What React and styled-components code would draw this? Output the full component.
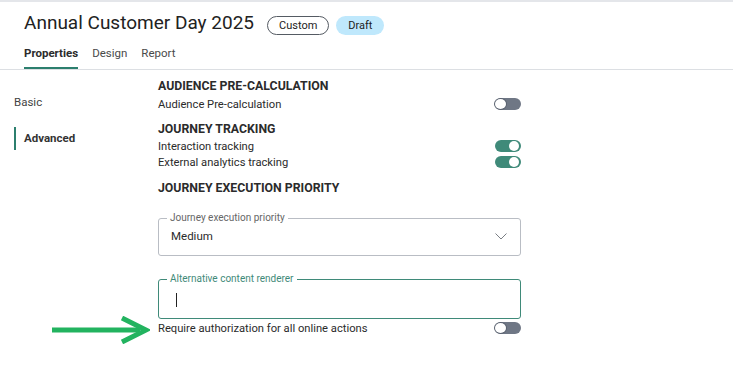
import React from 'react';
import styled, { createGlobalStyle } from 'styled-components';

const GlobalStyle = createGlobalStyle`
  body {
    margin: 0;
    background: #ffffff;
    font-family: Roboto, "Liberation Sans", sans-serif;
    color: #2b2b2b;
  }
`;

const Page = styled.div`
  width: 733px;
  height: 391px;
  border-top: 2px solid #e4e6ea;
  box-sizing: border-box;
  overflow: hidden;
`;

const Header = styled.header`
  padding: 9px 0 0 24px;
  border-bottom: 1px solid #dcdfe3;
`;

const TitleRow = styled.div`
  display: flex;
  align-items: baseline;
  gap: 13px;
`;

const Title = styled.h1`
  margin: 0;
  font-size: 19px;
  line-height: 24px;
  font-weight: 400;
  color: #222;
`;

const Badges = styled.div`
  display: flex;
  gap: 7px;
`;

const Badge = styled.span`
  display: inline-flex;
  align-items: center;
  justify-content: center;
  height: 19px;
  padding: 0 11px;
  border-radius: 10px;
  font-size: 11px;
  color: #222;
  box-sizing: border-box;
  border: 1px solid ${p => (p.$outlined ? '#555b63' : 'transparent')};
  background: ${p => (p.$outlined ? '#fff' : '#bfe8fc')};
`;

const Tabs = styled.nav`
  display: flex;
  gap: 14px;
  margin-top: 8px;
`;

const Tab = styled.div`
  font-size: 11.5px;
  line-height: 14px;
  padding: 3px 0 7px;
  font-weight: ${p => (p.$active ? 700 : 400)};
  color: ${p => (p.$active ? '#2b2b2b' : '#4a4a4a')};
  border-bottom: 2px solid ${p => (p.$active ? '#2c7f6e' : 'transparent')};
`;

const Body = styled.div`
  display: flex;
`;

const Sidebar = styled.aside`
  width: 158px;
  padding-top: 21px;
  display: flex;
  flex-direction: column;
  gap: 13px;
`;

const SideItem = styled.div`
  font-size: 11.5px;
  line-height: 23px;
  margin-left: 14px;
  padding-left: ${p => (p.$active ? '8px' : '0')};
  border-left: ${p => (p.$active ? '2px solid #2c7f6e' : 'none')};
  font-weight: ${p => (p.$active ? 700 : 400)};
  color: ${p => (p.$active ? '#333' : '#444')};
`;

const Content = styled.main`
  width: 363px;
  padding-top: 8px;
  display: flex;
  flex-direction: column;
`;

const Heading = styled.h2`
  margin: ${p => p.$top || 0}px 0 0;
  font-size: 12.3px;
  line-height: 16px;
  font-weight: 700;
  color: #2b2b2b;
`;

const Row = styled.div`
  display: flex;
  align-items: center;
  justify-content: space-between;
  height: 16px;
  margin-top: ${p => p.$top || 0}px;
  font-size: 11.2px;
  color: #2b2b2b;
`;

const Track = styled.span`
  position: relative;
  width: 26px;
  height: 12px;
  border-radius: 6px;
  background: ${p => (p.$on ? '#3f8a79' : '#6f7785')};
`;

const Knob = styled.span`
  position: absolute;
  top: 1px;
  left: ${p => (p.$on ? '14px' : '0px')};
  width: ${p => (p.$on ? '10px' : '11px')};
  height: 10px;
  border-radius: 50%;
  background: #fff;
  box-shadow: ${p => (p.$on ? 'none' : '0 0 0 1px #5a6270')};
`;

const Field = styled.div`
  position: relative;
  height: ${p => p.$h}px;
  margin-top: ${p => p.$top}px;
  border: 1px solid ${p => (p.$focus ? '#3f8a79' : '#b9bdc4')};
  border-radius: 3px;
  box-sizing: border-box;
  display: flex;
  align-items: center;
  padding: 0 13px 2px 12px;
`;

const Legend = styled.span`
  position: absolute;
  top: -7px;
  left: 8px;
  padding: 0 3px;
  background: #fff;
  font-size: 10px;
  line-height: 12px;
  color: ${p => (p.$focus ? '#3f8a79' : '#666')};
`;

const Value = styled.span`
  flex: 1;
  font-size: 11.5px;
  color: #2b2b2b;
`;

const Caret = styled.span`
  width: 1px;
  height: 14px;
  margin-left: 5px;
  margin-top: 3px;
  background: #222;
`;

const Arrow = styled.svg`
  position: absolute;
  left: 52px;
  top: 316px;
`;

function Toggle({ on }) {
  return (
    <Track $on={on}>
      <Knob $on={on} />
    </Track>
  );
}

export default function App() {
  return (
    <>
      <GlobalStyle />
      <Page>
        <Header>
          <TitleRow>
            <Title>Annual Customer Day 2025</Title>
            <Badges>
              <Badge $outlined>Custom</Badge>
              <Badge>Draft</Badge>
            </Badges>
          </TitleRow>
          <Tabs>
            <Tab $active>Properties</Tab>
            <Tab>Design</Tab>
            <Tab>Report</Tab>
          </Tabs>
        </Header>
        <Body>
          <Sidebar>
            <SideItem>Basic</SideItem>
            <SideItem $active>Advanced</SideItem>
          </Sidebar>
          <Content>
            <Heading>AUDIENCE PRE-CALCULATION</Heading>
            <Row $top={2}>
              Audience Pre-calculation
              <Toggle />
            </Row>
            <Heading $top={9}>JOURNEY TRACKING</Heading>
            <Row $top={1}>
              Interaction tracking
              <Toggle on />
            </Row>
            <Row>
              External analytics tracking
              <Toggle on />
            </Row>
            <Heading $top={10}>JOURNEY EXECUTION PRIORITY</Heading>
            <Field $h={38} $top={22}>
              <Legend>Journey execution priority</Legend>
              <Value>Medium</Value>
              <svg width="12" height="7" viewBox="0 0 12 7">
                <path d="M0.5 0.5 L6 6 L11.5 0.5" fill="none" stroke="#7a7e84" strokeWidth="1" />
              </svg>
            </Field>
            <Field $h={40} $top={23} $focus>
              <Legend $focus>Alternative content renderer</Legend>
              <Caret />
            </Field>
            <Row $top={1}>
              Require authorization for all online actions
              <Toggle />
            </Row>
          </Content>
        </Body>
        <Arrow width="98" height="28" viewBox="0 0 98 28">
          <path d="M0 14 H88" stroke="#22b35f" strokeWidth="5" />
          <path d="M70 2 L94 14 L70 26" fill="none" stroke="#22b35f" strokeWidth="5" strokeLinejoin="miter" />
        </Arrow>
      </Page>
    </>
  );
}
